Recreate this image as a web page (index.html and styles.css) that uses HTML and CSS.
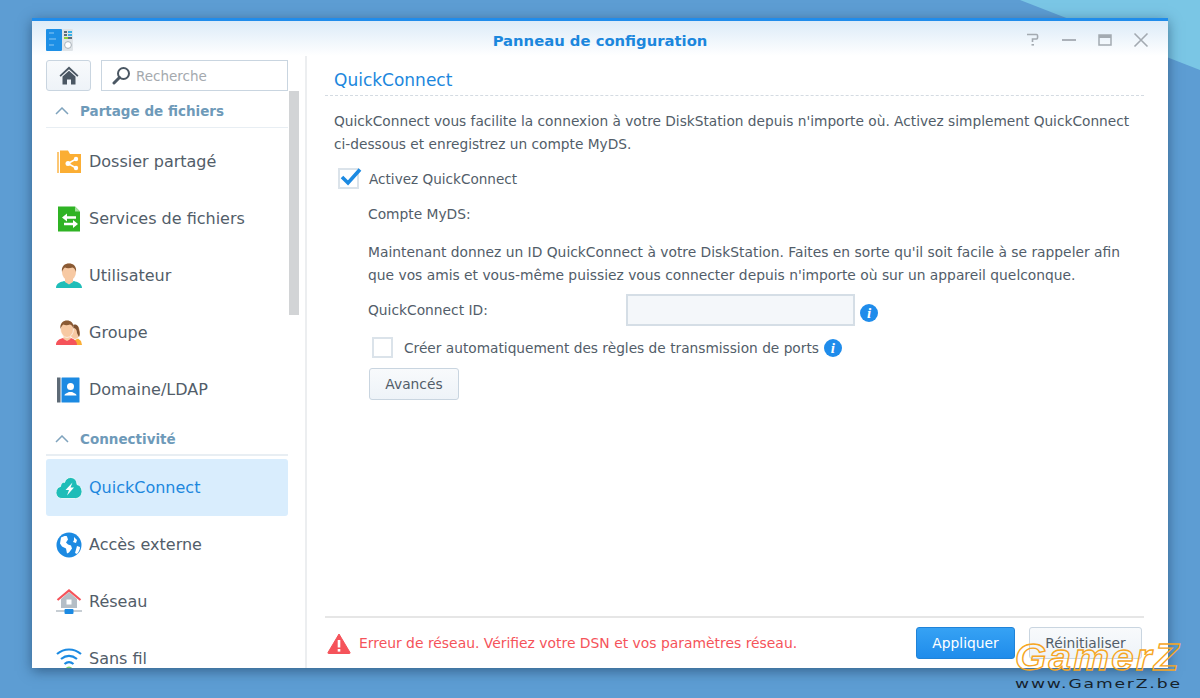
FILE: index.html
```html
<!DOCTYPE html>
<html lang="fr">
<head>
    <meta charset="UTF-8">
    <title>Panneau de configuration</title>
    <link rel="stylesheet" href="styles.css">
</head>
<body>
    <div class="wedge"></div>
    <div class="window">
        <div class="titlebar">
            <svg class="app-icon" width="28" height="24" viewBox="0 0 28 24">
                <rect x="0" y="1" width="16" height="22" rx="1" fill="#1d8fe6"/>
                <path d="M3 5h5M3 11h7M3 17h5" stroke="#8cc8f4" stroke-width="1"/>
                <rect x="16" y="1" width="11" height="22" rx="1" fill="#dfe4e8"/>
                <rect x="18" y="3" width="3" height="2" fill="#5b6b78"/>
                <rect x="22" y="3" width="4" height="2" fill="#35b0e8"/>
                <rect x="18" y="6" width="3" height="2" fill="#5b6b78"/>
                <rect x="22" y="6" width="4" height="2" fill="#35b0e8"/>
                <rect x="18" y="9" width="4" height="2" fill="#8ecf3a"/>
                <rect x="22" y="9" width="4" height="2" fill="#5b6b78"/>
                <circle cx="22" cy="17" r="3.4" fill="#fff" stroke="#a8b2ba"/>
            </svg>
            <div class="title">Panneau de configuration</div>
            <div class="win-controls">
                <svg width="16" height="16" viewBox="0 0 16 16" fill="none" stroke="#a3aab1" stroke-width="1.6"><path d="M2 2.500h9.500c1.500 0 1.500 4.500 0 4.500H7.500v3"/><path d="M6.500 12h2.500v1.600H6.500z" fill="#a3aab1" stroke="none"/></svg>
                <svg width="16" height="16" viewBox="0 0 16 16" fill="none" stroke="#a3aab1" stroke-width="1.8"><path d="M1 8h14"/></svg>
                <svg width="16" height="16" viewBox="0 0 16 16" fill="none" stroke="#a3aab1"><rect x="2" y="3" width="12" height="10" stroke-width="1.500"/><rect x="2" y="3" width="12" height="3" fill="#a3aab1" stroke="none"/></svg>
                <svg width="16" height="16" viewBox="0 0 16 16" fill="none" stroke="#a3aab1" stroke-width="1.600"><path d="M1.500 1.500l13 13M14.500 1.500l-13 13"/></svg>
            </div>
        </div>
        <div class="main">
            <aside class="sidebar">
                <div class="search-row">
                    <button class="home-btn">
                        <svg width="20" height="19" viewBox="0 0 20 19"><path d="M10 0.500L0.500 9.500l1.200 1.300L10 3.300l8.300 7.500 1.200-1.300z" fill="#4b5763"/><path d="M3.500 10.500L10 4.800l6.500 5.700V18.500h-4.500v-5H8v5H3.500z" fill="#4b5763"/></svg>
                    </button>
                    <div class="search">
                        <svg width="19" height="19" viewBox="0 0 19 19" fill="none"><circle cx="11.500" cy="7.500" r="5.500" stroke="#4b5763" stroke-width="2"/><path d="M7.500 11.500L2 17" stroke="#4b5763" stroke-width="3" stroke-linecap="round"/></svg>
                        <span>Recherche</span>
                    </div>
                </div>
                <div class="scrollbar"></div>
                <div class="nav">
                    <div class="nav-head">
                        <svg class="chev" width="14" height="8" viewBox="0 0 14 8" fill="none"><path d="M1 7l6-6 6 6" stroke="#7fa3bd" stroke-width="1.500"/></svg>
                        Partage de fichiers
                    </div>
                    <div class="nav-item">
                        <svg width="26" height="26" viewBox="0 0 26 26"><path d="M1 3h2v21H1z" fill="#fcc774"/><path d="M4 1.500h8l2 3.500h11v19H4z" fill="#fbae34"/><path d="M20 10l-8 4.500 8 4.500" stroke="#fff" stroke-width="1.500" fill="none"/><circle cx="12" cy="14.500" r="2.500" fill="#fff"/><circle cx="20" cy="10" r="2.200" fill="#fff"/><circle cx="20" cy="19" r="2.200" fill="#fff"/></svg>
                        <span>Dossier partagé</span>
                    </div>
                    <div class="nav-item">
                        <svg width="26" height="26" viewBox="0 0 26 26"><path d="M2 0.500h17l5 5v20H2z" fill="#2fb324"/><path d="M19 0.500v5h5z" fill="#a4e09e"/><path d="M6 11.500l5-4v2.800h9v2.500h-9v2.700zM22 18l-5-4v2.800H8v2.500h9V22z" fill="#fff"/></svg>
                        <span>Services de fichiers</span>
                    </div>
                    <div class="nav-item">
                        <svg width="26" height="26" viewBox="0 0 26 26"><path d="M0 25c0-5 5-6 8-7l5 2 5-2c3 1 8 2 8 7z" fill="#1fbdb8"/><path d="M9 15h8v4l-4 2.500L9 19z" fill="#f7c9a3"/><ellipse cx="13" cy="9" rx="7" ry="8.500" fill="#f7c9a3"/><path d="M6 9C5 3 9 0.500 13 0.500S21 3 20 9c-1-3-2-4-3.500-4.500-3 1-6 1-7.500 0C7.500 5.500 6.500 7 6 9z" fill="#8a5a34"/></svg>
                        <span>Utilisateur</span>
                    </div>
                    <div class="nav-item">
                        <svg width="26" height="26" viewBox="0 0 26 26"><path d="M16 25c0-3 2-5 4-5.500l2-1 3 2.500 1 4z" fill="#fbae34"/><ellipse cx="19" cy="12" rx="5" ry="7" fill="#f7c9a3"/><path d="M15 7c2-4 8-3 8 3 1 3 1 5 0 7l-2-4c0-3-1-5-6-6z" fill="#7d5130"/><path d="M0 25c0-4 3-6 7-7l4 2 4-2c3 1 6 3 6 7z" fill="#f5535a"/><path d="M7.500 15h7v4l-3.500 2-3.500-2z" fill="#f7c9a3"/><ellipse cx="11" cy="9" rx="6.500" ry="8.500" fill="#f7c9a3" stroke="#fff" stroke-width=".6"/><path d="M4.500 9C3.500 3 7.500 0.500 11 0.500S18.500 3 17.500 9c-1-3-2-4-3.500-4.500-2.500 1-5 1-6.500 0-1.500 1-2.500 2.500-3 4.500z" fill="#8a5a34"/></svg>
                        <span>Groupe</span>
                    </div>
                    <div class="nav-item">
                        <svg width="26" height="26" viewBox="0 0 26 26"><rect x="1" y="0.500" width="3.500" height="25" fill="#5d6a76"/><rect x="5.500" y="0.500" width="18" height="25" rx=".5" fill="#1c8ae2"/><circle cx="14.500" cy="9.500" r="3.500" fill="#fff"/><path d="M8.500 18.500c0-2 3-2.500 4.500-3.500h3c1.500 1 4.500 1.500 4.500 3.500z" fill="#fff"/></svg>
                        <span>Domaine/LDAP</span>
                    </div>
                    <div class="nav-head second">
                        <svg class="chev" width="14" height="8" viewBox="0 0 14 8" fill="none"><path d="M1 7l6-6 6 6" stroke="#7fa3bd" stroke-width="1.500"/></svg>
                        Connectivité
                    </div>
                    <div class="nav-item active">
                        <svg width="26" height="26" viewBox="0 0 26 26"><path d="M6 23.500c-3.500 0-6-2.500-6-6 0-3 2-5.500 4.500-6C5 7.500 7.500 7 8.500 7.500 9.500 4 12 2.500 14.500 2.500c4 0 6.500 3 6.500 7 3 .5 5 3.500 5 7 0 4-3 7-6.500 7z" fill="#1fbdb8" stroke="#fff" stroke-width=".8"/><path d="M16.500 7.500l-7 7.500h3.500l-2 5.500 7-8h-3.500z" fill="#fff"/></svg>
                        <span>QuickConnect</span>
                    </div>
                    <div class="nav-item">
                        <svg width="26" height="26" viewBox="0 0 26 26"><circle cx="13" cy="13" r="12.500" fill="#1c8ae2"/><path d="M5 5.500c2-1 5-2 6-1l1 3-2 3 2 2 3 1 1 3-3 4-2 1-1-5-4-2-2-3zM18 5l3 3-1 3-3-1 1-2zM21 14l3 1c0 2-1 5-3 7l-2-1z" fill="#fff"/></svg>
                        <span>Accès externe</span>
                    </div>
                    <div class="nav-item">
                        <svg width="26" height="26" viewBox="0 0 26 26"><path d="M5 10l8-7 8 7v9H5z" fill="#b5bec6"/><path d="M1.500 11L13 1.500 24.500 11" stroke="#f5535a" stroke-width="2.200" fill="none"/><rect x="10.500" y="10.500" width="5" height="5" fill="#fff"/><path d="M0 22h26" stroke="#b5bec6" stroke-width="1.500"/><rect x="8.500" y="20" width="9" height="5" rx="1" fill="#1c8ae2"/></svg>
                        <span>Réseau</span>
                    </div>
                    <div class="nav-item">
                        <svg width="26" height="26" viewBox="0 0 26 26" fill="none" stroke="#1c8ae2" stroke-width="2.200"><path d="M1 8c7-6 17-6 24 0M5 13c5-4 11-4 16 0M8.500 18c3-2.500 6-2.500 9 0"/><circle cx="13" cy="24" r="3.500" fill="#7ed06c" stroke="none"/></svg>
                        <span>Sans fil</span>
                    </div>
                </div>
            </aside>
            <section class="content">
                <h1 class="page-title">QuickConnect</h1>
                <p class="intro">QuickConnect vous facilite la connexion à votre DiskStation depuis n'importe où. Activez simplement QuickConnect ci-dessous et enregistrez un compte MyDS.</p>
                <div class="form">
                    <div class="check-row first">
                        <span class="checkbox">
                            <svg class="tick" width="24" height="20" viewBox="0 0 24 20" fill="none"><path d="M3 10l6 6L21 2.500" stroke="#1c8ae2" stroke-width="3.600"/></svg>
                        </span>
                        <label>Activez QuickConnect</label>
                    </div>
                    <div class="indent">
                        <div class="account">Compte MyDS:</div>
                        <p class="help">Maintenant donnez un ID QuickConnect à votre DiskStation. Faites en sorte qu'il soit facile à se rappeler afin que vos amis et vous-même puissiez vous connecter depuis n'importe où sur un appareil quelconque.</p>
                        <div class="field-row">
                            <label class="field-label">QuickConnect ID:</label>
                            <input class="field" type="text">
                            <span class="info">i</span>
                        </div>
                        <div class="check-row second">
                            <span class="checkbox"></span>
                            <label>Créer automatiquement des règles de transmission de ports</label>
                            <span class="info">i</span>
                        </div>
                        <button class="btn">Avancés</button>
                    </div>
                </div>
                <div class="footer">
                    <svg width="24" height="21" viewBox="0 0 24 21"><path d="M12 1L1 19.500c-.3.500 0 1 .5 1h21c.5 0 .8-.5.5-1z" fill="#f5535a" stroke="#f5535a"/><rect x="10.700" y="7" width="2.600" height="7.500" fill="#fff"/><rect x="10.700" y="16" width="2.600" height="2.600" fill="#fff"/></svg>
                    <span class="error">Erreur de réseau. Vérifiez votre DSN et vos paramètres réseau.</span>
                    <button class="btn primary">Appliquer</button>
                    <button class="btn reset">Réinitialiser</button>
                </div>
            </section>
        </div>
    </div>
    <div class="watermark">
        <div class="wm-big">GamerZ</div>
        <div class="wm-url">www.GamerZ.be</div>
    </div>
</body>
</html>
```

FILE: styles.css
```css
* {
    box-sizing: border-box;
}
html, body {
    height: 100%;
}
body {
    margin: 0;
    padding: 18px 32px 30px;
    overflow: hidden;
    position: relative;
    background: #5d9dd3;
    font-family: "DejaVu Sans", sans-serif;
    font-size: 13.800px;
    color: #525d69;
}
.wedge {
    position: absolute;
    inset: 0;
    background: #7ac6e5;
    clip-path: polygon(1020px 0, 1200px 70px, 1200px 0);
}
.window {
    position: relative;
    height: 650px;
    display: flex;
    flex-direction: column;
    background: #fff;
    border-top: 3px solid #1f8ceb;
    box-shadow: 0 3px 12px rgba(20, 50, 80, 0.55);
}
.titlebar {
    flex: none;
    height: 35px;
    display: flex;
    align-items: center;
    padding: 3px 19px 0 14px;
    background: linear-gradient(#dcebf8, #ffffff);
}
.app-icon {
    flex: none;
}
.title {
    flex: 1;
    text-align: center;
    font-size: 14.800px;
    font-weight: bold;
    color: #1c87dd;
    padding-left: 101px;
}
.win-controls {
    display: flex;
    gap: 20px;
}
.main {
    flex: 1;
    min-height: 0;
    display: flex;
}
.sidebar {
    position: relative;
    flex: none;
    width: 275px;
    padding: 4px 17px 0 14px;
    border-right: 2px solid #eceef0;
    overflow: hidden;
}
.search-row {
    display: flex;
    gap: 10px;
}
.home-btn {
    width: 45px;
    height: 31px;
    padding: 0;
    display: flex;
    align-items: center;
    justify-content: center;
    border: 1px solid #c9d5e0;
    border-radius: 3px;
    background: linear-gradient(#f8fafc, #eef3f8);
}
.search {
    flex: 1;
    height: 31px;
    display: flex;
    align-items: center;
    gap: 5px;
    padding-left: 10px;
    border: 1px solid #c9d5e0;
    font-size: 13.500px;
    color: #a4a9ae;
}
.scrollbar {
    position: absolute;
    left: 257px;
    top: 35px;
    width: 10px;
    height: 224px;
    background: #d2d4d6;
}
.nav-head {
    height: 34px;
    margin-top: 3px;
    display: flex;
    align-items: center;
    padding: 1px 0 0 9px;
    gap: 11px;
    border-bottom: 1px solid #e8eef3;
    font-size: 13.500px;
    font-weight: bold;
    color: #6e9ab9;
}
.nav-head.second {
    margin-top: 4px;
    border-bottom-width: 2px;
}
.nav-item {
    height: 57px;
    display: flex;
    align-items: center;
    gap: 7px;
    padding-left: 10px;
    border-radius: 3px;
    font-size: 16px;
}
.nav-head + .nav-item {
    margin-top: 5px;
}
.nav-head.second + .nav-item {
    margin-top: 3px;
}
.nav-item svg {
    flex: none;
}
.nav-item.active {
    background: #d9edfd;
    color: #1c87dd;
}
.content {
    flex: 1;
    min-width: 0;
    display: flex;
    flex-direction: column;
    padding: 0 24px 0 18px;
}
.page-title {
    margin: 0;
    height: 40px;
    padding: 14px 0 0 9px;
    border-bottom: 1px dashed #d4dbe2;
    font-size: 17px;
    font-weight: normal;
    color: #1c87dd;
}
.intro {
    margin: 14px 0 0 9px;
    font-size: 13.730px;
    line-height: 23px;
}
.form {
    flex: 1;
    min-height: 0;
    padding-left: 13px;
}
.check-row {
    display: flex;
    align-items: center;
}
.check-row.first {
    margin-top: 12px;
    gap: 10px;
    font-size: 13.600px;
}
.checkbox {
    position: relative;
    flex: none;
    width: 21px;
    height: 21px;
    border: 2px solid #dbe3ea;
    background: #fff;
}
.tick {
    position: absolute;
    left: -1px;
    top: -3px;
}
.indent {
    padding-left: 30px;
}
.first + .indent {
    margin-top: 15px;
}
.account {
    line-height: 20px;
}
.help {
    margin: 17px 0 0;
    font-size: 13.840px;
    line-height: 23px;
}
.field-row {
    display: flex;
    align-items: center;
    margin-top: 7px;
}
.field-label {
    width: 258px;
}
.field {
    width: 229px;
    height: 32px;
    border: 2px solid #d5dee6;
    background: #f4f7fa;
}
.field-row .info {
    margin: 6px 0 0 5px;
}
.info {
    flex: none;
    width: 18px;
    height: 18px;
    border-radius: 50%;
    background: #1f8ceb;
    color: #fff;
    font-family: "Liberation Serif", serif;
    font-size: 15px;
    font-style: italic;
    font-weight: bold;
    line-height: 18px;
    text-align: center;
}
.check-row.second {
    margin-top: 11px;
    padding-left: 4px;
    gap: 11px;
    font-size: 13.730px;
}
.check-row.second .info {
    margin-left: -6px;
}
.btn {
    height: 32px;
    padding: 0 16px;
    border: 1px solid #c9d5e0;
    border-radius: 3px;
    background: linear-gradient(#f8fafc, #eef3f8);
    font-family: inherit;
    font-size: 13.800px;
    color: #525d69;
}
.indent .btn {
    margin: 10px 0 0 1px;
    width: 90px;
    padding: 0;
}
.footer {
    flex: none;
    height: 52px;
    display: flex;
    align-items: center;
    padding: 0 2px;
    border-top: 2px solid #e6e6e6;
}
.error {
    flex: 1;
    margin-left: 8px;
    font-size: 13.900px;
    color: #f5535a;
}
.btn.primary {
    width: 99px;
    padding: 0;
    margin-right: 14px;
    border-color: #1f83d8;
    background: linear-gradient(#36a2f4, #1f8ceb);
    color: #fff;
}
.btn.reset {
    width: 113px;
    padding: 0;
}
.watermark {
    position: absolute;
    left: 1015px;
    top: 640px;
    width: 185px;
}
.wm-big {
    font-family: "Liberation Sans", sans-serif;
    font-size: 37px;
    font-weight: bold;
    font-style: italic;
    line-height: 36px;
    letter-spacing: 2px;
    color: transparent;
    -webkit-text-stroke: 1.300px #f6a623;
    transform: scaleX(1.09);
    transform-origin: left;
}
.wm-url {
    font-family: "DejaVu Sans", sans-serif;
    font-size: 13px;
    line-height: 15px;
    letter-spacing: 1.400px;
    color: #16222c;
    transform: scaleX(1.32);
    transform-origin: left;
}
```
